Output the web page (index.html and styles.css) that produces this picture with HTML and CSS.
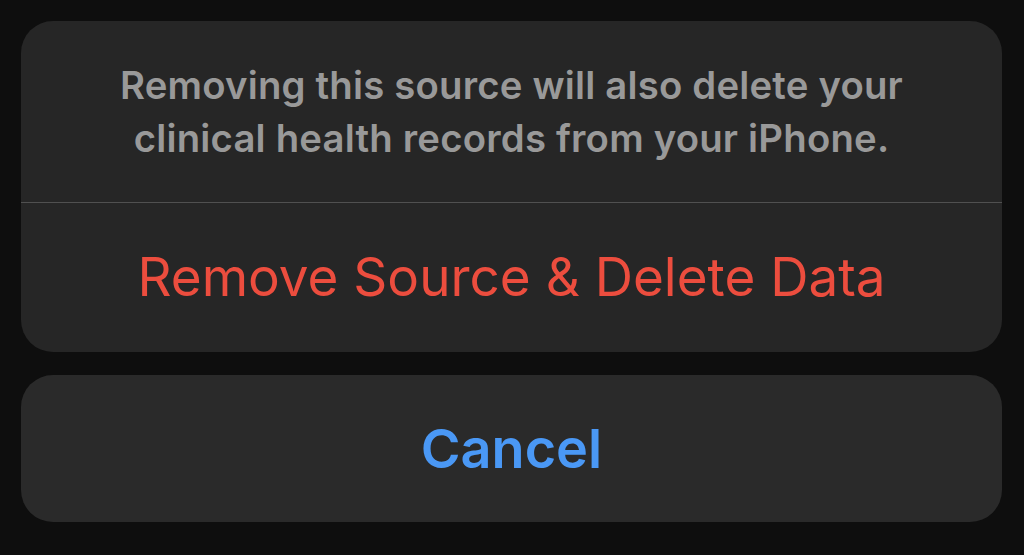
FILE: index.html
```html
<!DOCTYPE html>
<html>
<head>
<meta charset="utf-8">
<link rel="stylesheet" href="styles.css">
</head>
<body>
<div class="sheet">
  <div class="card">
    <div class="message">Removing this source will also delete your<br>clinical health records from your iPhone.</div>
    <div class="divider"></div>
    <div class="action destructive">Remove Source &amp; Delete Data</div>
  </div>
  <div class="card cancel-card">
    <div class="action cancel">Cancel</div>
  </div>
</div>
</body>
</html>
```
FILE: styles.css
```css
html, body {
  margin: 0;
  padding: 0;
  background: #0e0e0e;
  width: 1024px;
  height: 555px;
  overflow: hidden;
  font-family: Inter, "Noto Sans", sans-serif;
}
.sheet {
  display: flex;
  flex-direction: column;
  gap: 23px;
  padding: 21px 22px 0 21px;
}
.card {
  background: #262626;
  border-radius: 32px;
  display: flex;
  flex-direction: column;
  overflow: hidden;
}
.message {
  height: 181px;
  box-sizing: border-box;
  padding-top: 38px;
  text-align: center;
  color: #999999;
  font-size: 38.3px;
  font-weight: 600;
  line-height: 53px;
  letter-spacing: 0.2px;
}
.divider {
  height: 1px;
  background: #505050;
}
.action {
  display: flex;
  align-items: center;
  justify-content: center;
}
.destructive {
  height: 149px;
  color: #ec4d3e;
  font-size: 53px;
  font-weight: 400;
  padding-bottom: 2px;
  box-sizing: border-box;
}
.cancel-card {
  background: #2a2a2a;
}
.cancel {
  height: 147px;
  color: #4a98f5;
  font-size: 54px;
  font-weight: 600;
}
```
